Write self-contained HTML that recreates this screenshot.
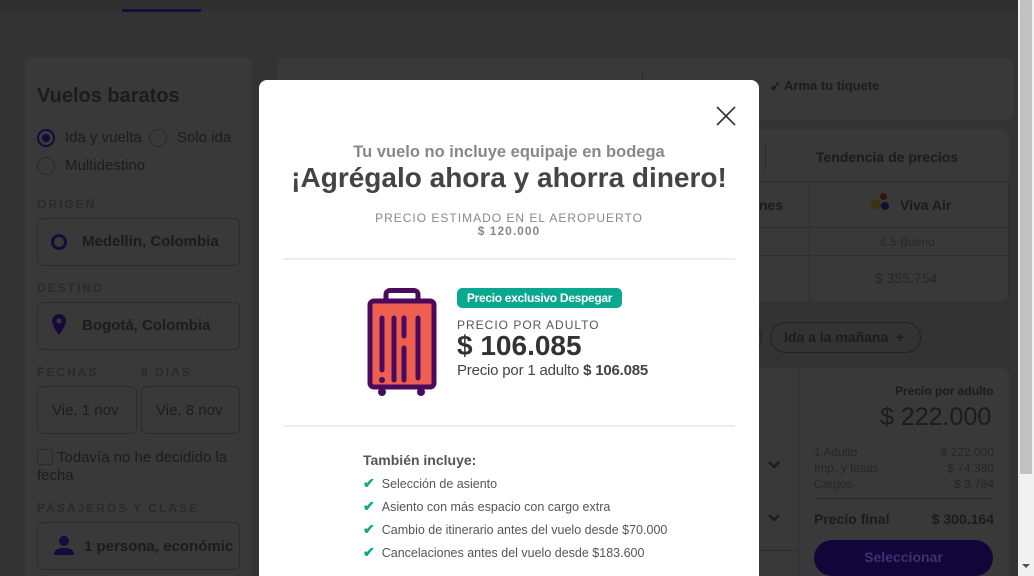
<!DOCTYPE html>
<html style="overflow:hidden;height:576px"><head><meta charset="utf-8"><style>
*{box-sizing:border-box;margin:0;padding:0}
body{width:1034px;height:576px;overflow:hidden;background:#333;font-family:"Liberation Sans",sans-serif;position:relative}
.a{position:absolute}
.panel{background:#393939;border-radius:8px}
.dk{color:#1c1c1c}
.lbl{font-size:12px;font-weight:bold;letter-spacing:2px;color:#2a2a2a}
.inp{border:1px solid #2c2c2c;border-radius:6px;background:#393939}
</style></head><body>
<div class="a" style="left:0;top:0;width:1018px;height:12px;background:#303030"></div>
<div class="a" style="left:122px;top:9px;width:79px;height:3px;background:#1a0a40"></div>
<div class="a panel" style="left:25px;top:57px;width:227px;height:519px;border-radius:8px 8px 0 0"></div>
<div class="a dk" style="left:37px;top:85px;font-size:20px;font-weight:bold">Vuelos baratos</div>
<div class="a" style="left:37px;top:129px;width:18px;height:18px;border-radius:50%;border:2px solid #160a3a"><div style="margin:3px;width:8px;height:8px;border-radius:50%;background:#160a3a"></div></div>
<div class="a dk" style="left:65px;top:129px;font-size:15px">Ida y vuelta</div>
<div class="a" style="left:149px;top:129px;width:18px;height:18px;border-radius:50%;border:1px solid #2a2a2a"></div>
<div class="a dk" style="left:177px;top:129px;font-size:15px">Solo ida</div>
<div class="a" style="left:37px;top:157px;width:18px;height:18px;border-radius:50%;border:1px solid #2a2a2a"></div>
<div class="a dk" style="left:65px;top:157px;font-size:15px">Multidestino</div>
<div class="a lbl" style="left:37px;top:197px">ORIGEN</div>
<div class="a inp" style="left:37px;top:218px;width:203px;height:48px"></div>
<div class="a" style="left:51px;top:234px;width:16px;height:16px;border-radius:50%;border:3px solid #160a3a"></div>
<div class="a dk" style="left:82px;top:233px;font-size:15px;font-weight:bold">Medellín, Colombia</div>
<div class="a lbl" style="left:37px;top:281px">DESTINO</div>
<div class="a inp" style="left:37px;top:302px;width:203px;height:48px"></div>
<svg class="a" style="left:51px;top:314px" width="16" height="22" viewBox="0 0 16 22"><path d="M8 0a7 7 0 0 0-7 7c0 5 7 14 7 14s7-9 7-14a7 7 0 0 0-7-7zm0 9.5a2.5 2.5 0 1 1 0-5 2.5 2.5 0 0 1 0 5z" fill="#160a3a"/></svg>
<div class="a dk" style="left:82px;top:317px;font-size:15px;font-weight:bold">Bogotá, Colombia</div>
<div class="a lbl" style="left:37px;top:365px">FECHAS</div>
<div class="a lbl" style="left:141px;top:365px">8 DÍAS</div>
<div class="a inp" style="left:37px;top:386px;width:100px;height:48px"></div>
<div class="a inp" style="left:141px;top:386px;width:99px;height:48px"></div>
<div class="a dk" style="left:52px;top:402px;font-size:15px;width:72px;overflow:hidden;white-space:nowrap">Vie, 1 nov 2</div>
<div class="a dk" style="left:156px;top:402px;font-size:15px">Vie, 8 nov</div>
<div class="a" style="left:37px;top:449px;width:16px;height:16px;border:1px solid #2a2a2a;border-radius:3px"></div>
<div class="a dk" style="left:37px;top:449px;font-size:15px;line-height:18px;width:200px;text-indent:20px">Todavía no he decidido la fecha</div>
<div class="a lbl" style="left:37px;top:501px">PASAJEROS Y CLASE</div>
<div class="a inp" style="left:37px;top:522px;width:203px;height:48px"></div>
<svg class="a" style="left:53px;top:536px" width="22" height="20" viewBox="0 0 22 20"><circle cx="11" cy="5" r="5" fill="#160a3a"/><path d="M1 19c0-6 5-7 10-7s10 1 10 7z" fill="#160a3a"/></svg>
<div class="a dk" style="left:84px;top:538px;font-size:15px;font-weight:bold;width:150px;overflow:hidden;white-space:nowrap">1 persona, económica</div>
<div class="a panel" style="left:277px;top:58px;width:736px;height:62px"></div>
<div class="a" style="left:642px;top:72px;width:1px;height:30px;background:#2a2a2a"></div>
<div class="a dk" style="left:770px;top:78px;font-size:13px;font-weight:bold">➹ Arma tu tiquete</div>
<div class="a panel" style="left:277px;top:129px;width:732px;height:172px"></div>
<div class="a" style="left:765px;top:143px;width:1px;height:28px;background:#2a2a2a"></div>
<div class="a dk" style="left:816px;top:149px;font-size:14px;font-weight:bold">Tendencia de precios</div>
<div class="a" style="left:740px;top:181px;width:269px;height:120px;border-top:1px solid #2e2e2e;border-right:1px solid #2e2e2e"></div>
<div class="a" style="left:809px;top:181px;width:1px;height:120px;background:#2e2e2e"></div>
<div class="a" style="left:740px;top:227px;width:269px;height:1px;background:#2e2e2e"></div>
<div class="a" style="left:740px;top:255px;width:269px;height:1px;background:#2e2e2e"></div>
<div class="a dk" style="left:759px;top:197px;font-size:14px;font-weight:bold">nes</div>
<div class="a" style="left:870px;top:199px;width:11px;height:11px;border-radius:50%;background:#3a3510"></div>
<div class="a" style="left:880px;top:193px;width:7px;height:7px;border-radius:50%;background:#3a1010"></div>
<div class="a" style="left:881px;top:202px;width:8px;height:8px;border-radius:50%;background:#101030"></div>
<div class="a dk" style="left:900px;top:197px;font-size:14px;font-weight:bold">Viva Air</div>
<div class="a" style="left:880px;top:235px;font-size:12px;color:#262626">6.5 Bueno</div>
<div class="a" style="left:875px;top:270px;font-size:14px;color:#262626">$ 355.754</div>
<div class="a" style="left:740px;top:322px;width:22px;height:31px;border:1px solid #222;border-left:none;border-radius:0 16px 16px 0"></div>
<div class="a" style="left:770px;top:322px;width:151px;height:31px;border:1px solid #222;border-radius:16px"></div>
<div class="a dk" style="left:784px;top:329px;font-size:14px;font-weight:bold">Ida a la mañana &nbsp;+</div>
<div class="a panel" style="left:740px;top:368px;width:269px;height:208px;border-radius:0 8px 0 0"></div>
<div class="a" style="left:798px;top:368px;width:1px;height:208px;background:#2e2e2e"></div>
<div class="a" style="left:740px;top:550px;width:58px;height:1px;background:#2e2e2e"></div>
<svg class="a" style="left:768px;top:461px" width="12" height="8" viewBox="0 0 12 8"><path d="M1 1l5 5 5-5" stroke="#1c1c1c" stroke-width="2.5" fill="none"/></svg>
<svg class="a" style="left:768px;top:514px" width="12" height="8" viewBox="0 0 12 8"><path d="M1 1l5 5 5-5" stroke="#1c1c1c" stroke-width="2.5" fill="none"/></svg>
<div class="a dk" style="left:895px;top:384px;font-size:12px;font-weight:bold">Precio por adulto</div>
<div class="a dk" style="left:880px;top:403px;font-size:25px">$ 222.000</div>
<div class="a" style="left:814px;top:444px;font-size:12px;line-height:16px;color:#262626;width:180px">1 Adulto<span style="float:right">$ 222.000</span><br>Imp. y tasas<span style="float:right">$ 74.380</span><br>Cargos<span style="float:right">$ 3.784</span></div>
<div class="a" style="left:814px;top:498px;width:180px;height:1px;background:#2a2a2a"></div>
<div class="a dk" style="left:814px;top:511px;font-size:14px;font-weight:bold;width:180px">Precio final<span style="float:right">$ 300.164</span></div>
<div class="a" style="left:814px;top:540px;width:179px;height:36px;border-radius:18px;background:#12053a;color:#3a3470;font-size:14px;font-weight:bold;text-align:center;line-height:34px">Seleccionar</div>
<div class="a" style="left:1018px;top:0;width:16px;height:576px;background:#f1f1f1"></div>
<div class="a" style="left:1020px;top:0;width:12px;height:474px;background:#c1c1c1"></div>
<div class="a" style="left:1022px;top:564px;border-left:4px solid transparent;border-right:4px solid transparent;border-top:4px solid #505050"></div>
<!-- modal -->
<div class="a" style="left:259px;top:80px;width:500px;height:496px;background:#fff;border-radius:8px 8px 0 0"></div>
<svg class="a" style="left:716px;top:106px" width="20" height="20" viewBox="0 0 20 20"><path d="M1 1L19 19M19 1L1 19" stroke="#333" stroke-width="1.6"/></svg>
<div class="a" style="left:259px;top:143px;width:500px;text-align:center;font-size:16.5px;font-weight:bold;color:#888">Tu vuelo no incluye equipaje en bodega</div>
<div class="a" style="left:259px;top:162px;width:500px;text-align:center;font-size:28px;font-weight:bold;color:#444">¡Agrégalo ahora y ahorra dinero!</div>
<div class="a" style="left:259px;top:212px;width:500px;text-align:center;font-size:12px;letter-spacing:1px;color:#888;line-height:13px">PRECIO ESTIMADO EN EL AEROPUERTO<br><b>$ 120.000</b></div>
<div class="a" style="left:283px;top:258px;width:452px;height:2px;background:#eee"></div>
<svg class="a" style="left:367px;top:288px" width="70" height="108" viewBox="0 0 70 108"><rect x="19" y="2.5" width="32" height="18" rx="4" fill="none" stroke="#4a0b5e" stroke-width="5"/><rect x="3" y="13" width="64" height="86" rx="4" fill="#ef5f50" stroke="#4a0b5e" stroke-width="5"/><g stroke="#4a0b5e" stroke-width="5" stroke-linecap="round"><path d="M15 30v52"/><path d="M27 30v62"/><path d="M37 30v18M37 60v32"/><path d="M51 30v60"/></g><circle cx="15" cy="92" r="3" fill="#4a0b5e"/><circle cx="15" cy="104" r="4" fill="#4a0b5e"/><circle cx="54" cy="104" r="4" fill="#4a0b5e"/></svg>
<div class="a" style="left:457px;top:288px;width:165px;height:20px;background:#0aa88f;border-radius:5px;color:#fff;font-size:12px;font-weight:bold;text-align:center;line-height:20px;letter-spacing:-.3px">Precio exclusivo Despegar</div>
<div class="a" style="left:457px;top:318px;font-size:12px;letter-spacing:1px;color:#555">PRECIO POR ADULTO</div>
<div class="a" style="left:457px;top:330px;font-size:28px;font-weight:bold;color:#333">$ 106.085</div>
<div class="a" style="left:457px;top:362px;font-size:15px;color:#444;letter-spacing:-.2px">Precio por 1 adulto <b>$ 106.085</b></div>
<div class="a" style="left:283px;top:425px;width:452px;height:2px;background:#eee"></div>
<div class="a" style="left:363px;top:452px;font-size:14px;font-weight:bold;color:#555">También incluye:</div>
<div class="a" style="left:363px;top:472px;font-size:12.5px;color:#555;line-height:22px">
<div><span style="color:#0aa88f;font-weight:bold;font-size:14px;margin-right:7px">✔</span>Selección de asiento</div>
<div><span style="color:#0aa88f;font-weight:bold;font-size:14px;margin-right:7px">✔</span>Asiento con más espacio con cargo extra</div>
<div><span style="color:#0aa88f;font-weight:bold;font-size:14px;margin-right:7px">✔</span>Cambio de itinerario antes del vuelo desde $70.000</div>
<div><span style="color:#0aa88f;font-weight:bold;font-size:14px;margin-right:7px">✔</span>Cancelaciones antes del vuelo desde $183.600</div>
</div>
</body></html>
